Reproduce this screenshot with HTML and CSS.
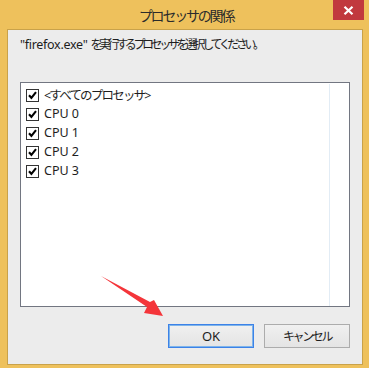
FILE: index.html
```html
<!DOCTYPE html>
<html lang="ja">
<head>
  <meta charset="UTF-8" />
  <title>プロセッサの関係</title>
  <link rel="stylesheet" href="styles.css">
</head>
<body>
  <div class="window">
    <div class="titlebar">
      <span class="title">プロセッサの関係</span>
      <div class="close">
        <svg width="11" height="9" viewBox="0 0 11 9"><path d="M1.5 0.8 L9.5 8.2 M9.5 0.8 L1.5 8.2" stroke="#fff" stroke-width="2.2"/></svg>
      </div>
    </div>

    <div class="client">
      <p class="prompt">"firefox.exe" <span class="ja">を実行するプロセッサを選択してください。</span></p>

      <div class="listbox">
        <ul class="items">
          <li><span class="check"></span><span class="ja-item">&lt;すべてのプロセッサ&gt;</span></li>
          <li><span class="check"></span>CPU 0</li>
          <li><span class="check"></span>CPU 1</li>
          <li><span class="check"></span>CPU 2</li>
          <li><span class="check"></span>CPU 3</li>
        </ul>
      </div>

      <div class="buttons">
        <button class="btn default">OK</button>
        <button class="btn"><span class="ja-btn">キャンセル</span></button>
      </div>
    </div>

    <!-- 注釈の矢印 -->
    <svg class="arrow" width="66" height="44" viewBox="0 0 66 44">
      <polygon points="0,0 49,26 53,24 62,40 43,37 46,31" fill="#f4353a"/>
    </svg>
  </div>
</body>
</html>
```

FILE: styles.css
```css
/* ウィンドウ枠 */
body {
  margin: 0;
  background: #eec15c;
  font-family: "Noto Sans", "Noto Sans CJK JP", sans-serif;
  font-size: 12px;
  color: #1e1e1e;
}
.window {
  position: relative;
  width: 369px;
  height: 368px;
  box-sizing: border-box;
  padding: 0 6px 3px 7px;
  display: flex;
  flex-direction: column;
}

/* タイトルバー */
.titlebar {
  position: relative;
  height: 29px;
  display: flex;
  align-items: center;
  justify-content: center;
  flex-shrink: 0;
}
.title {
  font-family: "Noto Sans CJK JP", sans-serif;
  font-size: 14px;
  letter-spacing: -2.2px;
  color: #2b2b2b;
  margin-left: 2px;
  margin-top: 1px;
}
.close {
  position: absolute;
  top: 0;
  right: -0.5px;
  width: 31px;
  height: 20px;
  background: #c1393e;
  display: flex;
  align-items: center;
  justify-content: center;
}

/* クライアント領域 */
.client {
  flex: 1;
  background: #ececec;
  border: 1px solid #c9a24a;
  padding: 0 12px 0 12px;
  display: flex;
  flex-direction: column;
}
.prompt {
  margin: 7px 0 0 0;
  line-height: 16px;
  height: 16px;
  white-space: nowrap;
  font-size: 12.5px;
  letter-spacing: -0.3px;
}
.ja {
  font-size: 12px;
  letter-spacing: -3.4px;
}

/* リスト */
.listbox {
  margin-top: 29px;
  width: 330px;
  height: 225px;
  box-sizing: border-box;
  background: #fff;
  border: 1px solid #727681;
  display: flex;
}
.items {
  list-style: none;
  margin: 1px 0 0 0;
  padding: 1px 0 0 5px;
  width: 303px;
  border-right: 1px solid #e2ecf5;
  font-size: 12.5px;
}
.items li {
  height: 19px;
  display: flex;
  align-items: center;
  gap: 5px;
  white-space: nowrap;
}
.ja-item {
  letter-spacing: -1.8px;
}
.check {
  width: 11px;
  height: 11px;
  border: 1px solid #333;
  background: #fff url("data:image/svg+xml;utf8,<svg xmlns='http://www.w3.org/2000/svg' width='11' height='11'><path d='M2 5.2 L4.4 7.8 L9 2.2' fill='none' stroke='black' stroke-width='2.1'/></svg>") no-repeat center;
  margin-top: 1px;
}

/* ボタン */
.buttons {
  margin-top: 17px;
  width: 330px;
  display: flex;
  justify-content: flex-end;
  gap: 10px;
}
.btn {
  width: 86px;
  height: 24px;
  font-family: "Noto Sans", "Noto Sans CJK JP", sans-serif;
  font-size: 13px;
  color: #1e1e1e;
  background: linear-gradient(#f0f0f0, #e4e4e4);
  border: 1px solid #acacac;
  padding: 0;
}
.ja-btn {
  font-size: 12px;
  letter-spacing: -2.4px;
}
.btn.default {
  border: 1px solid #3c82e8;
  box-shadow: inset 0 0 0 1px #7eb4ea;
}

/* 注釈 */
.arrow {
  position: absolute;
  left: 101px;
  top: 276px;
}
```
